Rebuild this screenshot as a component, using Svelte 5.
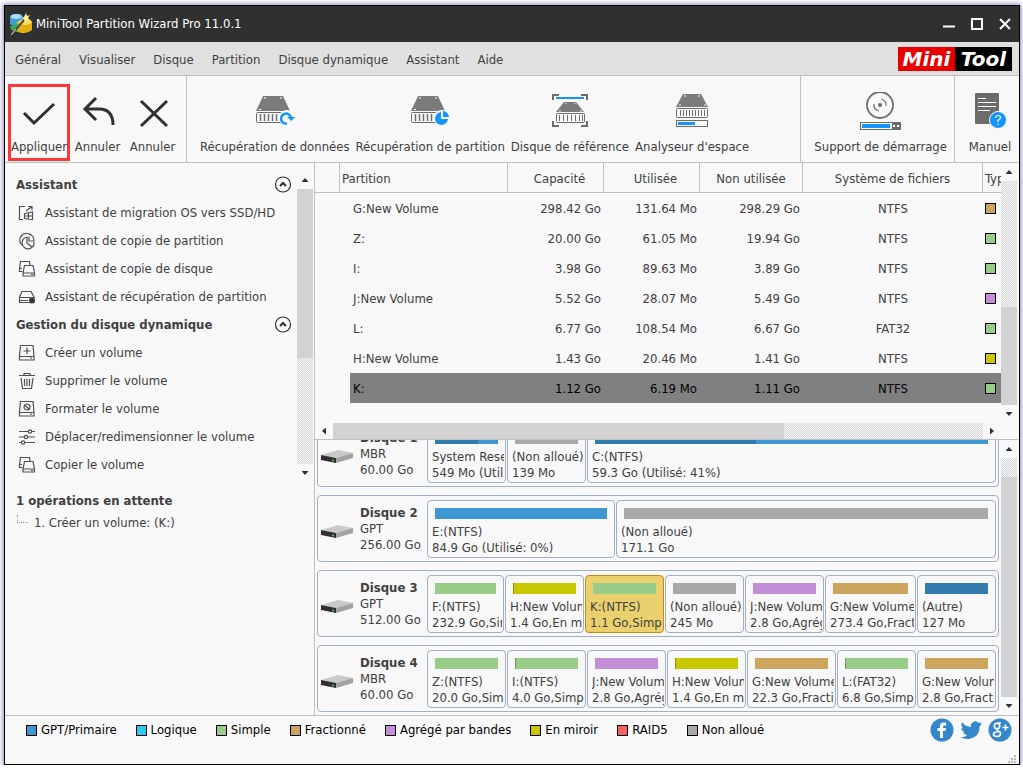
<script lang="ts">
	type Part = { name: string; info: string; size: number; color: string; used?: number; selected?: boolean };

	const colors: Record<string, string> = {
		primary: '#3e97d3',
		used: '#327cad',
		logical: '#29cbee',
		simple: '#98cc88',
		spanned: '#cca65e',
		striped: '#c48dd8',
		mirror: '#c8c800',
		raid: '#f46464',
		free: '#a9a9a9'
	};

	const menus = ['Général', 'Visualiser', 'Disque', 'Partition', 'Disque dynamique', 'Assistant', 'Aide'];

	const sections = [
		{
			title: 'Assistant',
			items: [
				{ icon: 'migrate', label: 'Assistant de migration OS vers SSD/HD' },
				{ icon: 'pie', label: 'Assistant de copie de partition' },
				{ icon: 'copy', label: 'Assistant de copie de disque' },
				{ icon: 'recover', label: 'Assistant de récupération de partition' }
			]
		},
		{
			title: 'Gestion du disque dynamique',
			items: [
				{ icon: 'create', label: 'Créer un volume' },
				{ icon: 'trash', label: 'Supprimer le volume' },
				{ icon: 'format', label: 'Formater le volume' },
				{ icon: 'sliders', label: 'Déplacer/redimensionner le volume' },
				{ icon: 'copy', label: 'Copier le volume' }
			]
		}
	];

	const rows = [
		{ name: 'G:New Volume', total: '298.42 Go', used: '131.64 Mo', free: '298.29 Go', fs: 'NTFS', color: 'spanned' },
		{ name: 'Z:', total: '20.00 Go', used: '61.05 Mo', free: '19.94 Go', fs: 'NTFS', color: 'simple' },
		{ name: 'I:', total: '3.98 Go', used: '89.63 Mo', free: '3.89 Go', fs: 'NTFS', color: 'simple' },
		{ name: 'J:New Volume', total: '5.52 Go', used: '28.07 Mo', free: '5.49 Go', fs: 'NTFS', color: 'striped' },
		{ name: 'L:', total: '6.77 Go', used: '108.54 Mo', free: '6.67 Go', fs: 'FAT32', color: 'simple' },
		{ name: 'H:New Volume', total: '1.43 Go', used: '20.46 Mo', free: '1.41 Go', fs: 'NTFS', color: 'mirror' },
		{ name: 'K:', total: '1.12 Go', used: '6.19 Mo', free: '1.11 Go', fs: 'NTFS', color: 'simple' }
	];

	const disks: { name: string; scheme: string; size: string; parts: Part[] }[] = [
		{
			name: 'Disque 1', scheme: 'MBR', size: '60.00 Go',
			parts: [
				{ name: 'System Reserved(NTFS)', info: '549 Mo (Utilisé: 68%)', size: 79, color: 'primary', used: 68 },
				{ name: '(Non alloué)', info: '139 Mo', size: 79, color: 'free' },
				{ name: 'C:(NTFS)', info: '59.3 Go (Utilisé: 41%)', size: 409, color: 'primary', used: 41 }
			]
		},
		{
			name: 'Disque 2', scheme: 'GPT', size: '256.00 Go',
			parts: [
				{ name: 'E:(NTFS)', info: '84.9 Go (Utilisé: 0%)', size: 188, color: 'primary' },
				{ name: '(Non alloué)', info: '171.1 Go', size: 380, color: 'free' }
			]
		},
		{
			name: 'Disque 3', scheme: 'GPT', size: '512.00 Go',
			parts: [
				{ name: 'F:(NTFS)', info: '232.9 Go,Simple', size: 77, color: 'simple' },
				{ name: 'H:New Volume(NTFS)', info: '1.4 Go,En miroir', size: 79, color: 'mirror', used: 1 },
				{ name: 'K:(NTFS)', info: '1.1 Go,Simple', size: 79, color: 'simple', selected: true },
				{ name: '(Non alloué)', info: '245 Mo', size: 79, color: 'free' },
				{ name: 'J:New Volume(NTFS)', info: '2.8 Go,Agrégé par bandes', size: 79, color: 'striped' },
				{ name: 'G:New Volume(NTFS)', info: '273.4 Go,Fractionné', size: 91, color: 'spanned' },
				{ name: '(Autre)', info: '127 Mo', size: 79, color: 'used' }
			]
		},
		{
			name: 'Disque 4', scheme: 'MBR', size: '60.00 Go',
			parts: [
				{ name: 'Z:(NTFS)', info: '20.0 Go,Simple', size: 79, color: 'simple' },
				{ name: 'I:(NTFS)', info: '4.0 Go,Simple', size: 79, color: 'simple', used: 1 },
				{ name: 'J:New Volume(NTFS)', info: '2.8 Go,Agrégé par bandes', size: 79, color: 'striped' },
				{ name: 'H:New Volume(NTFS)', info: '1.4 Go,En miroir', size: 79, color: 'mirror', used: 1 },
				{ name: 'G:New Volume(NTFS)', info: '22.3 Go,Fractionné', size: 89, color: 'spanned' },
				{ name: 'L:(FAT32)', info: '6.8 Go,Simple', size: 79, color: 'simple', used: 1 },
				{ name: 'G:New Volume(NTFS)', info: '2.8 Go,Fractionné', size: 79, color: 'spanned' }
			]
		}
	];

	const legend = [
		['GPT/Primaire', 'primary'],
		['Logique', 'logical'],
		['Simple', 'simple'],
		['Fractionné', 'spanned'],
		['Agrégé par bandes', 'striped'],
		['En miroir', 'mirror'],
		['RAID5', 'raid'],
		['Non alloué', 'free']
	];

	// padding and border of a block, which do not grow with it
	const EDGES = 16;

	let current = $state('K:');
	let closed: Record<string, boolean> = $state({});

	const usedShade = (part: Part) => (part.color === 'primary' ? colors.used : '#0004');
</script>

{#snippet scrollbar(before: number, thumb: number, after: number, dir: string)}
	<div class="scrollbar {dir}" aria-hidden="true">
		<div class="arrow start"><i></i></div>
		<div style="flex-grow: {before}"></div>
		<div class="thumb" style="flex-grow: {thumb}"></div>
		<div style="flex-grow: {after}"></div>
		<div class="arrow end"><i></i></div>
	</div>
{/snippet}

{#snippet tool(icon: string, label: string)}
	<button class="tool" class:primary={icon === 'apply'}>
		<svg width="44" height="40" viewBox="0 0 44 40" fill="none">
			{#if icon === 'apply'}
				<path d="M7 21 L17 31 L37 12" stroke="#303030" stroke-width="3" />
			{:else if icon === 'undo'}
				<path d="M20 6 L9 17 L20 28 M9 17 H23 Q37 17 37 33" stroke="#303030" stroke-width="3" />
			{:else if icon === 'cancel'}
				<path d="M10 9 L36 34 M36 9 L10 34" stroke="#303030" stroke-width="3" />
			{:else if icon === 'data' || icon === 'part'}
				<path d="M10 4 H30 L37 19 H3 Z" fill="#7b7b7b" />
				<path d="M12 5v2 M28 5v2 M6 17.500h2" stroke="#fff" />
				<rect x="3.500" y="20.500" width="33" height="10" rx="1" stroke="#6c6c6c" />
				<path d="M7.500 22v7 M11.500 22v7 M15.500 22v7 M19.500 22v7 M23.500 22v7" stroke="#6c6c6c" stroke-width="1.500" />
				<circle cx="34" cy="26" r="8" fill="#f8f8f8" />
				{#if icon === 'data'}
					<path d="M34 31.500 A5 5 0 1 1 38 26" stroke="#1494ff" stroke-width="2.500" />
					<path d="M34 25 H42 L38.500 29 Z" fill="#1494ff" />
				{:else}
					<path d="M33 20 V27 H40 A6.500 6.500 0 1 1 33 20 Z M35 19 A6.500 6.500 0 0 1 41 25 H35 Z" fill="#1494ff" />
				{/if}
			{:else if icon === 'bench'}
				<path d="M5 8 V3 H11 M33 3 H39 V8 M5 29 V34 H11 M33 34 H39 V29" stroke="#6c6c6c" stroke-width="2" />
				<path d="M8 6 H36" stroke="#1494ff" stroke-width="2" />
				<path d="M16 10 H28 L36 20 H8 Z" fill="#7b7b7b" />
				<path d="M18 11v1 M27 11v1 M11 19h2 M32 19h2" stroke="#fff" />
				<rect x="8.500" y="21.500" width="28" height="9" rx="1" stroke="#6c6c6c" />
				<path d="M11.500 23v6 M15.500 23v6 M19.500 23v6 M23.500 23v6 M27.500 23v6 M31.500 23v6 M34.500 23v6" stroke="#6c6c6c" />
			{:else if icon === 'space'}
				<path d="M13 2 H31 L38 15 H6 Z" fill="#7b7b7b" />
				<path d="M15 3v2 M29 3v2 M9 13h2 M34 13h2" stroke="#fff" />
				<rect x="6.500" y="16.500" width="31" height="9" rx="1" stroke="#6c6c6c" />
				<path d="M10.500 18v6 M13.500 18v6 M16.500 18v6 M19.500 18v6 M22.500 18v6 M25.500 18v6 M28.500 18v6 M31.500 18v6 M34.500 18v6" stroke="#6c6c6c" />
				<rect x="6.500" y="28.500" width="31" height="6" stroke="#6c6c6c" />
				<rect x="8" y="30" width="17" height="3" fill="#1494ff" />
			{:else if icon === 'boot'}
				<circle cx="21" cy="13" r="13" stroke="#6c6c6c" stroke-width="1.800" />
				<circle cx="21" cy="13" r="2" fill="#6c6c6c" />
				<path d="M22 7 A6 6 0 0 1 27 14 M20 19 A6 6 0 0 1 15 12" stroke="#6c6c6c" stroke-width="1.200" />
				<rect x="1.500" y="30.500" width="32" height="7" stroke="#6c6c6c" />
				<rect x="33" y="30" width="9" height="8" fill="#6c6c6c" />
				<path d="M34 33h2v2h-2z M38 33h2v2h-2z" fill="#fff" />
				<rect x="3" y="32" width="28" height="4" fill="#1494ff" />
			{:else}
				<path d="M7 2 Q7 1 8 1 H30 Q31 1 31 2 V32 H8 Q7 32 7 31 Z" fill="#6c6c6c" />
				<path d="M10 6.500H18 M10 10.500H28 M10 14.500H28 M10 18.500H22" stroke="#fff" />
				<circle cx="30" cy="28" r="8.500" fill="#1494ff" stroke="#f8f8f8" />
				<path d="M27.500 26 Q28 23.500 30 23.500 Q32.500 23.500 32.500 25.500 Q32.500 27 30 28.500 V30 M30 31.500 V33" stroke="#fff" stroke-width="1.200" />
			{/if}
		</svg>
		<span>{label}</span>
	</button>
{/snippet}

{#snippet small(icon: string)}
	<svg width="18" height="18" viewBox="0 0 18 18" fill="none" stroke="#505050" stroke-width="1.200">
		{#if icon === 'migrate'}
			<path d="M7 2.500H1.500V15.500H5 M8 7L14 2.500 M10 2.500H14V6" />
			<path d="M6.500 9.500L14.500 8V15.500L6.500 14.500Z M10.500 9V15 M6.500 12H14.500" />
		{:else if icon === 'pie'}
			<path d="M4 13 A6.500 6.500 0 1 1 13 3" />
			<path d="M9 5 A6 6 0 1 0 16 10 M9 5V11L14 15 M11 2 A7 7 0 0 1 16 9H11V4.500" />
		{:else if icon === 'copy'}
			<path d="M4.500 11.500H1.500V9L2.500 1.500H11.500L12 5 M1.500 8.500H4" />
			<path d="M6.500 5.500H15L16.500 13V16H5V13ZM5 13H16.500 M13 14.500H15" />
		{:else if icon === 'recover'}
			<path d="M4 3.500H13L16 9V14.500H1.500V9ZM1.500 9.500H16 M2 12.500H10" />
			<circle cx="14" cy="12.500" r="2.500" fill="#303030" />
		{:else if icon === 'create'}
			<path d="M2.500 1.500H15L16 12V16H1.500V12ZM1.500 12.500H16 M9 3.500V10 M5.500 7H12.500 M12 14H14" />
		{:else if icon === 'trash'}
			<path d="M1 3.500H17 M6 3.500V1.500H12V3.500 M3 6L4.500 16.500H13.500L15 6 M6.500 7V14 M9 7V14 M11.500 7V14" />
		{:else if icon === 'format'}
			<path d="M2.500 1.500H15L16 12V16H1.500V12ZM1.500 12.500H16 M6.500 5L11 9 M12 14H14" />
			<circle cx="9" cy="7" r="3" />
		{:else}
			<path d="M1 3.500H10 M14 3.500H17 M1 9H6 M10 9H17 M1 14.500H3 M7 14.500H17" />
			<circle cx="12" cy="3.500" r="1.700" /><circle cx="8" cy="9" r="1.700" /><circle cx="5" cy="14.500" r="1.700" />
		{/if}
	</svg>
{/snippet}

<div class="window">
	<header class="titlebar">
		<svg width="24" height="24" viewBox="0 0 24 24">
			<path d="M1 6 Q1 3 7 2 Q12 1 14 5 L12 14 Q6 16 1 12Z" fill="#3d9fd8" />
			<ellipse cx="7" cy="4.500" rx="5.500" ry="2.500" fill="#a9def5" />
			<path d="M8 10 Q13 7 23 9 V18 Q16 24 7 19Z" fill="#e0ac18" />
			<path d="M1 14 L9 12 L8 20 Q2 20 1 14Z" fill="#3faa4c" />
			<ellipse cx="16" cy="10" rx="6.500" ry="3" fill="#f6dc50" />
			<path d="M17 1 L18 4 L21 3 L19 6 L22 9 L18 8 L16 11 L15 7 L12 6 L15 5Z" fill="#fff2a0" />
			<path d="M3 22 L15 8" stroke="#4a4a4a" stroke-width="2" />
			<path d="M2 23 L7 17" stroke="#ddd" />
		</svg>
		<h1>MiniTool Partition Wizard Pro 11.0.1</h1>
		<div class="controls">
			<button aria-label="Réduire"><svg width="12" height="12"><path d="M0 8.500H12" stroke="#fff" stroke-width="2" /></svg></button>
			<button aria-label="Agrandir"><svg width="12" height="12"><path d="M1 1H11V11H1Z" fill="none" stroke="#fff" stroke-width="2" /></svg></button>
			<button aria-label="Fermer"><svg width="12" height="12"><path d="M1 1L11 11M11 1L1 11" stroke="#fff" stroke-width="2" /></svg></button>
		</div>
	</header>

	<nav class="menubar">
		{#each menus as menu}
			<button>{menu}</button>
		{/each}
		<div class="brand"><span>Mini</span><span>Tool</span></div>
	</nav>

	<div class="toolbar">
		<div class="group actions">
			{@render tool('apply', 'Appliquer')}
			{@render tool('undo', 'Annuler')}
			{@render tool('cancel', 'Annuler')}
		</div>
		<div class="group wide">
			{@render tool('data', 'Récupération de données')}
			{@render tool('part', 'Récupération de partition')}
			{@render tool('bench', 'Disque de référence')}
			{@render tool('space', "Analyseur d'espace")}
		</div>
		<div class="group">{@render tool('boot', 'Support de démarrage')}</div>
		<div class="group">{@render tool('manual', 'Manuel')}</div>
	</div>

	<main>
		<aside>
			<div class="scroller">
				<div class="sections">
					{#each sections as section}
						<div class="section-head">
							<h2>{section.title}</h2>
							<button
								aria-label={section.title}
								aria-expanded={!closed[section.title]}
								onclick={() => (closed[section.title] = !closed[section.title])}
							>
								<svg width="18" height="18" viewBox="0 0 18 18" fill="none" stroke="#303030">
									<circle cx="9" cy="8.500" r="7.500" stroke-width="1.200" />
									<path d="M6 10L9 7L12 10" stroke-width="2" />
								</svg>
							</button>
						</div>
						{#if !closed[section.title]}
							{#each section.items as item}
								<button class="item">{@render small(item.icon)}{item.label}</button>
							{/each}
						{/if}
					{/each}
				</div>
				{@render scrollbar(0, 169, 106, 'vertical')}
			</div>
			<div class="pending">
				<h2>1 opérations en attente</h2>
				<ul>
					<li>1. Créer un volume: (K:)</li>
				</ul>
			</div>
		</aside>

		<div class="content">
			<section class="list">
				<div class="list-main">
					<div class="table-wrap">
						<table>
							<colgroup>
								<col class="c-tree" /><col /><col class="c-size" /><col class="c-size" />
								<col class="c-free" /><col class="c-fs" /><col class="c-type" />
							</colgroup>
							<thead>
								<tr>
									<th></th>
									<th>Partition</th>
									<th>Capacité</th>
									<th>Utilisée</th>
									<th>Non utilisée</th>
									<th>Système de fichiers</th>
									<th>Type</th>
								</tr>
							</thead>
							<tbody>
								{#each rows as row}
									<tr class:selected={row.name === current} onclick={() => (current = row.name)}>
										<td></td>
										<td><span>{row.name}</span></td>
										<td>{row.total}</td>
										<td>{row.used}</td>
										<td>{row.free}</td>
										<td>{row.fs}</td>
										<td><i class="swatch" style="background: {colors[row.color]}"></i></td>
									</tr>
								{/each}
							</tbody>
						</table>
					</div>
					{@render scrollbar(0, 451, 199, 'horizontal')}
				</div>
				<div class="list-side">
					{@render scrollbar(126, 98, 0, 'vertical')}
				</div>
			</section>

			<section class="map">
				<div class="disks">
					{#each disks as disk}
						<div class="disk">
							<svg width="34" height="20" viewBox="0 -5 34 20">
								<path d="M1 6L18 1L33 4L16 9Z" fill="#c9c9c9" />
								<path d="M1 6L16 9V14L1 11Z" fill="#303030" />
								<path d="M16 9L33 4V9L16 14Z" fill="#a2a2a2" />
								<circle cx="13" cy="11.500" r="1" fill="#4ad04a" />
							</svg>
							<div class="disk-label">
								<strong>{disk.name}</strong>
								<span>{disk.scheme}</span>
								<span>{disk.size}</span>
							</div>
							{#each disk.parts as part}
								<div class="part" class:active={part.selected} style="flex-grow: {part.size - EDGES}">
									<div class="bar" style="background: {colors[part.color]}">
										{#if part.used}
											<div class="used" style="width: {part.used}%; background: {usedShade(part)}"></div>
										{/if}
									</div>
									<span>{part.name}</span>
									<span>{part.info}</span>
								</div>
							{/each}
						</div>
					{/each}
				</div>
				{@render scrollbar(19, 220, 0, 'vertical')}
			</section>
		</div>
	</main>

	<footer>
		<ul class="legend">
			{#each legend as [label, color]}
				<li><i class="swatch" style="background: {colors[color]}"></i>{label}</li>
			{/each}
		</ul>
		<div class="social">
			<a href="#facebook" aria-label="Facebook">
				<svg width="24" height="24" viewBox="0 0 24 24">
					<circle cx="12" cy="12" r="11.500" fill="#3587cb" />
					<path d="M10 20V13H7.500V10H10V8Q10 4.500 13.500 4.500H16V7.500H14.500Q13 7.500 13 9V10H16L15.500 13H13V20Z" fill="#fff" />
				</svg>
			</a>
			<a href="#twitter" aria-label="Twitter">
				<svg width="24" height="24" viewBox="0 0 24 24">
					<path d="M23 5.500Q22 6 20.800 6.200Q22 5.300 22.400 4Q21.200 4.700 19.600 5A4.400 4.400 0 0 0 12 9Q6.500 8.700 3 4.300Q1.300 8 4.300 10.300Q3.200 10.200 2.300 9.700Q2.400 13 6 14.100Q5 14.300 4 14.200Q5 17 8.200 17.200Q5.500 19.400 1.500 19Q6 21.600 11 20.800Q20.500 19 20.800 8Q22.200 7 23 5.500Z" fill="#3587cb" />
				</svg>
			</a>
			<a href="#google" aria-label="Google+">
				<svg width="24" height="24" viewBox="0 0 24 24" fill="none" stroke="#fff">
					<circle cx="12" cy="12" r="11.500" fill="#3587cb" stroke="none" />
					<circle cx="9" cy="8" r="2.700" stroke-width="1.600" />
					<path d="M9.500 5H13 M10 11Q8 12 10 13Q13 14 12.500 16Q12 18.500 9 18.500Q5.500 18.500 5.500 16Q5.500 14 9.500 14" stroke-width="1.600" />
					<path d="M14.500 9.500H20.500M17.500 6.500V12.500" stroke-width="1.600" />
				</svg>
			</a>
		</div>
		<svg class="grip" width="9" height="9" fill="#b8b8b8">
			<path d="M6 0h2v2h-2zM3 3h2v2h-2zM6 3h2v2h-2zM0 6h2v2h-2zM3 6h2v2h-2zM6 6h2v2h-2z" />
		</svg>
	</footer>
</div>

<style>
	:global(body) {
		background: #fff;
	}

	.window {
		box-sizing: border-box;
		display: flex;
		flex-direction: column;
		height: calc(100vh - 11px);
		margin: 5px 3px 0 4px;
		border: 1px solid #000;
		box-shadow: 0 0 5px 1px #8888b8;
		background: #f8f8f8;
		color: #404040;
		font: 13px/16px Tahoma, "DejaVu Sans Condensed", "DejaVu Sans", sans-serif;
	}

	button {
		padding: 0;
		border: 0;
		background: none;
		color: inherit;
		font: inherit;
	}

	h1,
	h2,
	ul {
		margin: 0;
		padding: 0;
		font-size: 13px;
		list-style: none;
	}

	svg {
		display: block;
		flex: none;
	}

	.titlebar {
		display: flex;
		align-items: center;
		gap: 3px;
		height: 36px;
		padding: 0 8px 0 4px;
		background: #303030;
		color: #fff;
	}

	h1 {
		font-weight: normal;
	}

	.controls {
		display: flex;
		gap: 16px;
		margin-left: auto;
	}

	.menubar {
		display: flex;
		align-items: center;
		gap: 18px;
		height: 33px;
		padding: 0 7px 0 10px;
		border-bottom: 1px solid #c0c0c0;
		background: #e0e0e0;
	}

	.menubar button {
		padding-top: 2px;
	}

	.brand {
		display: flex;
		margin-left: auto;
		color: #fff;
		font: italic bold 20px/24px Verdana, "DejaVu Sans", sans-serif;
	}

	.brand span {
		width: 57px;
		background: #e80000;
		text-align: center;
	}

	.brand span:last-child {
		background: #000;
	}

	.toolbar {
		display: flex;
		height: 86px;
		border-bottom: 1px solid #c0c0c0;
	}

	.group {
		display: flex;
		padding: 8px 4px 0 10px;
	}

	.group + .group {
		border-left: 1px solid #c0c0c0;
	}

	.actions {
		padding: 8px 6px 0 3px;
	}

	.wide {
		flex: 1;
	}

	.tool {
		display: flex;
		flex-direction: column;
		align-items: center;
		gap: 5px;
		box-sizing: border-box;
		height: 77px;
		padding: 5px 0 1px;
		border: 3px solid transparent;
		line-height: 20px;
		white-space: nowrap;
	}

	.actions .tool {
		width: 55px;
	}

	.actions .primary {
		width: 62px;
		border-color: #ff3636;
	}

	main {
		display: flex;
		flex: 1;
		min-height: 0;
	}

	aside {
		width: 309px;
		border-right: 1px solid #c0c0c0;
	}

	.scroller {
		display: flex;
		padding: 8px 1px 0 11px;
	}

	.sections {
		flex: 1;
		height: 311px;
		overflow: hidden;
	}

	.section-head {
		display: flex;
		align-items: center;
		justify-content: space-between;
		height: 28px;
		padding-right: 5px;
	}

	.item {
		display: flex;
		align-items: center;
		gap: 9px;
		height: 28px;
		padding-left: 2px;
		white-space: nowrap;
	}

	.pending {
		padding: 11px;
	}

	.pending ul {
		padding: 6px 0 0 1px;
	}

	.pending li {
		display: flex;
		gap: 6px;
	}

	.pending li::before {
		content: '';
		width: 10px;
		height: 7px;
		border: 1px dotted #999;
		border-width: 0 0 1px 1px;
	}

	.scrollbar {
		display: flex;
		flex: none;
		background: repeating-conic-gradient(#d4d4d4 0 25%, #f8f8f8 0 50%) 0 0 / 2px 2px;
	}

	.vertical {
		flex-direction: column;
		width: 16px;
	}

	.horizontal {
		height: 16px;
	}

	.thumb {
		background: #d2d2d2;
	}

	.arrow {
		display: flex;
		align-items: center;
		justify-content: center;
		width: 16px;
		height: 18px;
		background: #f8f8f8;
	}

	.horizontal .arrow {
		width: 18px;
		height: 16px;
	}

	.arrow i {
		width: 7px;
		height: 4px;
		background: #303030;
		clip-path: polygon(50% 0, 100% 100%, 0 100%);
	}

	.vertical .end i {
		clip-path: polygon(0 0, 100% 0, 50% 100%);
	}

	.horizontal i {
		width: 4px;
		height: 7px;
		clip-path: polygon(100% 0, 100% 100%, 0 50%);
	}

	.horizontal .end i {
		clip-path: polygon(0 0, 100% 50%, 0 100%);
	}

	.content {
		display: flex;
		flex: 1;
		flex-direction: column;
		min-width: 0;
	}

	.list {
		display: flex;
		flex: none;
		height: 276px;
		padding-right: 2px;
		border-bottom: 1px solid #c0c0c0;
	}

	.list-main {
		display: flex;
		flex: 1;
		flex-direction: column;
		min-width: 0;
	}

	.list-side {
		display: flex;
		padding-bottom: 16px;
	}

	.table-wrap {
		flex: 1;
		overflow: hidden;
	}

	table {
		width: 100%;
		border-spacing: 0;
		table-layout: fixed;
	}

	.c-tree {
		width: 25px;
	}

	.c-size {
		width: 96px;
	}

	.c-free {
		width: 103px;
	}

	.c-fs {
		width: 180px;
	}

	.c-type {
		width: 18px;
	}

	th {
		height: 27px;
		padding: 2px 0 0;
		overflow: hidden;
		border: 1px solid #c0c0c0;
		border-width: 0 1px 1px 0;
		font-weight: normal;
		white-space: nowrap;
	}

	th:nth-child(2),
	th:last-child {
		padding-left: 2px;
		text-align: left;
	}

	th:nth-child(3),
	th:nth-child(4) {
		padding-left: 8px;
	}

	th:last-child {
		border-right: 0;
	}

	td {
		height: 28px;
		padding: 2px 3px 0 0;
		text-align: right;
	}

	td:nth-child(2) {
		padding: 0 0 0 10px;
		text-align: left;
	}

	td span {
		display: block;
		padding: 2px 0 0 3px;
		line-height: 28px;
	}

	td:nth-child(6) {
		padding-right: 0;
		text-align: center;
	}

	td:last-child {
		padding: 0 0 0 2px;
		text-align: left;
	}

	.selected {
		color: #000;
	}

	.selected span,
	.selected td:nth-child(n + 3) {
		background: #808080;
	}

	.swatch {
		display: block;
		box-sizing: border-box;
		flex: none;
		width: 11px;
		height: 11px;
		border: 1px solid #000;
	}

	.map {
		display: flex;
		flex: 1;
		min-height: 0;
		padding-right: 2px;
	}

	/* the list is scrolled down past the top of the first disk */
	.disks {
		display: flex;
		flex: 1;
		flex-direction: column;
		justify-content: flex-end;
		gap: 8px;
		min-width: 0;
		padding: 0 2px 3px;
		overflow: hidden;
	}

	.disk {
		display: flex;
		flex: none;
		align-items: center;
		gap: 1px;
		height: 65px;
		padding: 0 2px;
		border: 1px solid #9fafc7;
		border-radius: 4px;
	}

	.disk-label {
		display: flex;
		flex-direction: column;
		width: 66px;
		padding-left: 5px;
	}

	.part {
		box-sizing: border-box;
		flex: 0 1 0;
		min-width: 0;
		height: 58px;
		padding: 7px 7px 0;
		overflow: hidden;
		border: 1px solid #9fafc7;
		border-radius: 4px;
	}

	.active {
		border-color: #c98a10;
		background: #ebd06e;
	}

	.bar {
		height: 11px;
		margin-bottom: 5px;
	}

	.used {
		min-width: 1px;
		height: 11px;
	}

	.part span {
		display: block;
		margin: 0 -6px 0 -3px;
		overflow: hidden;
		white-space: nowrap;
	}

	footer {
		position: relative;
		display: flex;
		align-items: flex-start;
		justify-content: space-between;
		height: 46px;
		padding: 2px 7px 0 21px;
		border-top: 1px solid #c0c0c0;
		color: #000;
	}

	.legend {
		display: flex;
		gap: 19px;
		padding-top: 4px;
	}

	.legend li {
		display: flex;
		align-items: center;
		gap: 4px;
	}

	.social {
		display: flex;
		gap: 5px;
	}

	.grip {
		position: absolute;
		right: 2px;
		bottom: 0;
	}
</style>
